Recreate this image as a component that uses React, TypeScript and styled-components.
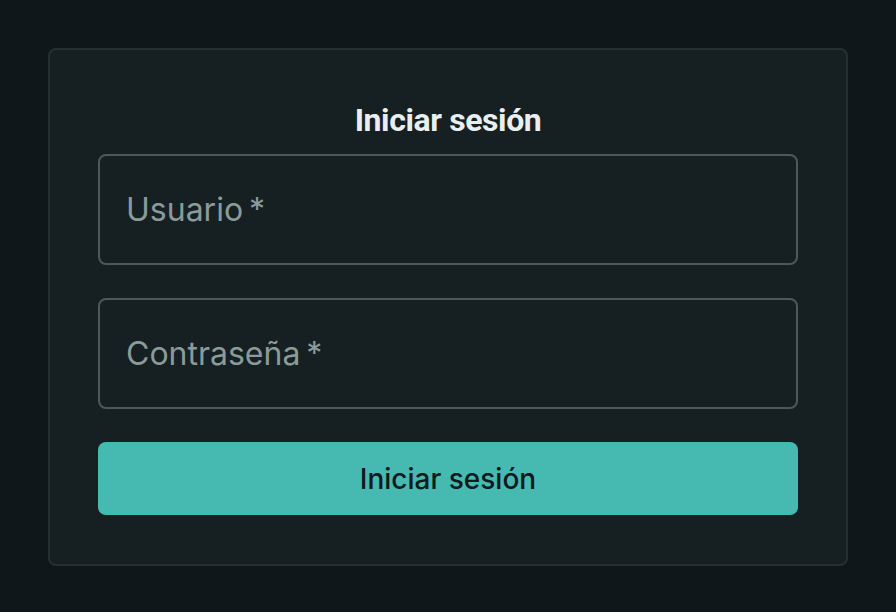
import React from "react";
import styled, { createGlobalStyle } from "styled-components";

const GlobalStyle = createGlobalStyle`
  html, body {
    margin: 0;
    padding: 0;
    background: #0f171a;
  }

  * {
    box-sizing: border-box;
  }
`;

const Page = styled.main`
  width: 896px;
  height: 612px;
  padding: 48px;
  background: #0f171a;
`;

const Card = styled.form`
  display: flex;
  flex-direction: column;
  width: 800px;
  padding: 48px 48px 49px;
  background: #162022;
  border: 2px solid #243032;
  border-radius: 8px;
`;

const Title = styled.h1`
  margin: 2px 0 13px;
  font-family: Roboto, "Liberation Sans", sans-serif;
  font-size: 32px;
  line-height: 41px;
  font-weight: 700;
  letter-spacing: -0.4px;
  text-align: center;
  color: #e9eff0;
`;

const Field = styled.input`
  width: 100%;
  height: 111px;
  margin: 0 0 33px;
  padding: 0 26px;
  background: transparent;
  border: 2px solid #4d5859;
  border-radius: 8px;
  font-family: Inter, "Liberation Sans", sans-serif;
  font-size: 32px;
  color: #e9eff0;
  outline: none;

  &::placeholder {
    color: #8a9b99;
  }
`;

const SubmitButton = styled.button`
  width: 100%;
  height: 73px;
  background: #46b9b0;
  border: none;
  border-radius: 8px;
  font-family: Inter, "Liberation Sans", sans-serif;
  font-size: 28px;
  font-weight: 500;
  color: #0e1a1b;
  cursor: pointer;
`;

export default function App() {
  return (
    <>
      <GlobalStyle />
      <Page>
        <Card onSubmit={(e) => e.preventDefault()}>
          <Title>Iniciar sesión</Title>
          <Field type="text" placeholder={"Usuario\u2009*"} />
          <Field type="password" placeholder={"Contraseña\u2009*"} />
          <SubmitButton type="submit">Iniciar sesión</SubmitButton>
        </Card>
      </Page>
    </>
  );
}
